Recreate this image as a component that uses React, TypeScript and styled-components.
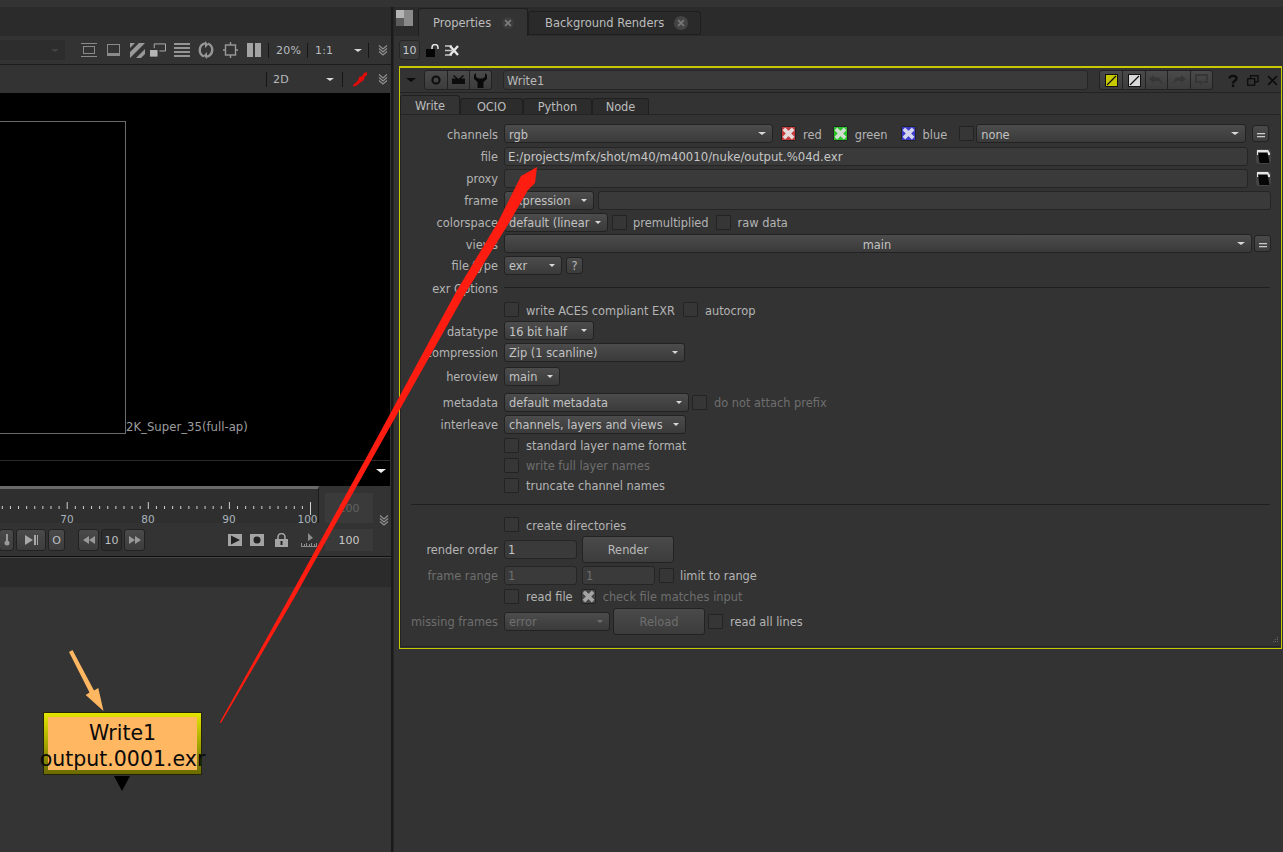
import * as React from 'react';
import styled, { createGlobalStyle } from 'styled-components';

const Colors = {
    panel: '#333333',
    dark: '#2b2b2b',
    label: '#b4b4b4',
    dim: '#6e6e6e',
    yellow: '#c8c800',
};

const GlobalStyle = createGlobalStyle`
    html, body {
        margin: 0;
        padding: 0;
        background: ${Colors.panel};
    }
    body {
        font-family: "DejaVu Sans", sans-serif;
        font-size: 11.4px;
        color: #c4c4c4;
    }
`;

const Page = styled.div`
    position: relative;
    width: 1283px;
    height: 852px;
    overflow: hidden;
    display: grid;
    grid-template-columns: 391px 3px 1fr;
    background: ${Colors.panel};
`;

const LeftPane = styled.div`
    display: flex;
    flex-direction: column;
    min-width: 0;
    overflow: hidden;
`;

const Divider = styled.div`
    background: #1a1a1a;
    border-right: 1px solid #262626;
    margin-top: 7px;
`;

const TopStrip = styled.div`
    height: 7px;
    background: #333;
    flex: none;
`;

const DarkStrip = styled.div`
    height: 29px;
    background: ${Colors.dark};
    flex: none;
`;

const ViewerBar = styled.div`
    height: 28px;
    display: flex;
    align-items: center;
    background: #333;
    flex: none;
`;

const ViewerBarTwo = styled(ViewerBar)`
    border-top: 1px solid #1c1c1c;
`;

const DisabledCombo = styled.div`
    flex: 1;
    height: 20px;
    background: #2d2d2d;
    display: flex;
    align-items: center;
    justify-content: flex-end;
    padding-right: 6px;
    margin-right: 16px;
    box-sizing: border-box;
`;

const Spacer = styled.div`
    flex: 1;
`;

const Gap = styled.div<{ $w: number }>`
    width: ${p => p.$w}px;
    flex: none;
`;

const IconSlot = styled.div<{ $w: number; $ml?: number }>`
    width: ${p => p.$w}px;
    margin-left: ${p => p.$ml ?? 0}px;
    height: 18px;
    display: flex;
    align-items: center;
    justify-content: center;
    flex: none;
`;

const ToolSep = styled.div<{ $l: number; $r: number }>`
    width: 1px;
    height: 15px;
    background: #161616;
    margin: 0 ${p => p.$r}px 0 ${p => p.$l}px;
    flex: none;
`;

const ToolText = styled.span<{ $w: number }>`
    color: #b8bcc0;
    font-size: 11px;
    letter-spacing: 0.2px;
    white-space: nowrap;
    width: ${p => p.$w}px;
    flex: none;
`;

const Tri = styled.span<{ $size?: number; $color?: string }>`
    display: inline-block;
    width: 0;
    height: 0;
    border-left: ${p => p.$size ?? 4}px solid transparent;
    border-right: ${p => p.$size ?? 4}px solid transparent;
    border-top: ${p => (p.$size ?? 4) - 0.5}px solid ${p => p.$color ?? '#d8d8d8'};
    flex: none;
`;

const Viewer = styled.div`
    position: relative;
    height: 367px;
    background: #000;
    flex: none;
    border-right: 1px solid #333;
`;

const FormatBox = styled.div`
    position: absolute;
    left: -2px;
    top: 28px;
    width: 126px;
    height: 311px;
    border: 1px solid #6b6b6b;
`;

const FormatLabel = styled.span`
    position: absolute;
    left: 126px;
    top: 327px;
    font-size: 11.7px;
    line-height: 14px;
    color: #9c9c9c;
`;

const ViewerInfo = styled.div`
    background: #000;
    border-top: 1px solid #2a2a2a;
    border-right: 1px solid #333;
    display: flex;
    align-items: center;
    justify-content: flex-end;
    padding: 0 4px 6px 0;
    height: 19px;
    flex: none;
`;

const Timeline = styled.div`
    height: 70px;
    background: #333;
    flex: none;
    display: grid;
    grid-template-columns: 319px 1fr;
    grid-template-rows: 37px 33px;
`;

const Ruler = styled.div`
    border-top: 3px solid #6a6a6a;
    border-right: 1px solid #1c1c1c;
    background: #2f2f2f;
    height: 37px;
    box-sizing: border-box;
    overflow: hidden;
`;

const RulerSvg = styled.svg`
    display: block;
`;

const RangeCol = styled.div`
    display: flex;
    align-items: flex-start;
    padding: 7px 0 0 6px;
    gap: 6px;
`;

const ChevronDrop = styled.div`
    margin-top: 21px;
`;

const RangeField = styled.div<{ $dim?: boolean }>`
    width: 48px;
    height: ${p => (p.$dim ? 30 : 22)}px;
    background: #3a3a3a;
    color: ${p => (p.$dim ? '#626262' : '#c8c8c8')};
    display: flex;
    align-items: center;
    justify-content: center;
    font-size: 11px;
    flex: none;
`;

const TransportRow = styled.div`
    display: flex;
    align-items: center;
    padding: 6px 2px 5px 0;
    box-sizing: border-box;
    height: 33px;
    gap: 2px;
    overflow: hidden;
`;

const TransportBtn = styled.div<{ $w: number; $ml?: number; $flat?: boolean }>`
    width: ${p => p.$w}px;
    height: 22px;
    margin-left: ${p => p.$ml ?? 0}px;
    background: ${p => (p.$flat ? '#2d2d2d' : 'linear-gradient(#4a4a4a, #3d3d3d)')};
    border: 1px solid #222;
    border-radius: 3px;
    box-sizing: border-box;
    display: flex;
    align-items: center;
    justify-content: center;
    flex: none;
    color: #bcc0c4;
    font-size: 11px;
`;

const TransportIcon = styled.svg<{ $ml: number }>`
    flex: none;
    margin-left: ${p => p.$ml}px;
`;

const RangeBottom = styled.div`
    padding: 6px 0 0 6px;
    display: flex;
`;

const BlackLine = styled.div`
    height: 1px;
    background: #0f0f0f;
    flex: none;
`;

const GreyGap = styled.div`
    height: 1px;
    background: #444;
    flex: none;
`;

const StatusBand = styled.div`
    height: 29px;
    background: ${Colors.dark};
    flex: none;
`;

const NodeGraph = styled.div`
    position: relative;
    flex: 1;
    background: #343434;
`;

const WriteNode = styled.div`
    position: absolute;
    left: 43px;
    top: 125px;
    width: 159px;
    height: 63px;
    box-sizing: border-box;
    border: 1px solid #24240a;
    background: linear-gradient(#e4e400, #6a6a00);
    padding: 4px;
`;

const NodeFace = styled.div`
    height: 100%;
    background: #ffb762;
    display: flex;
    flex-direction: column;
    align-items: center;
    padding-top: 3px;
    box-sizing: border-box;
    font-size: 20.5px;
    line-height: 26px;
    color: #0a0a0a;
    white-space: nowrap;
`;

const NodeOutput = styled.div`
    position: absolute;
    left: 114px;
    top: 189px;
    width: 0;
    height: 0;
    border-left: 8px solid transparent;
    border-right: 8px solid transparent;
    border-top: 15px solid #000;
`;

const RightPane = styled.div`
    display: flex;
    flex-direction: column;
    min-width: 0;
`;

const TabRow = styled.div`
    margin-top: 7px;
    height: 29px;
    background: ${Colors.dark};
    display: flex;
    align-items: flex-end;
    flex: none;
`;

const PaneCorner = styled.div`
    width: 17px;
    height: 16px;
    margin: 0 5px 10px 2px;
    background:
        linear-gradient(#b4b4b4, #b4b4b4) 0 0 / 8px 8px no-repeat,
        linear-gradient(#5c5c5c, #5c5c5c) 0 8px / 8px 8px no-repeat,
        #8a8a8a;
    flex: none;
`;

const PaneTab = styled.div<{ $active?: boolean; $w: number }>`
    width: ${p => p.$w}px;
    height: ${p => (p.$active ? 28 : 24)}px;
    box-sizing: border-box;
    display: flex;
    align-items: center;
    padding-left: ${p => (p.$active ? 14 : 16)}px;
    gap: ${p => (p.$active ? 11 : 10)}px;
    background: ${p => (p.$active ? '#333' : '#2a2a2a')};
    border: 1px solid #1e1e1e;
    border-bottom: ${p => (p.$active ? 'none' : '1px solid #1e1e1e')};
    border-radius: 3px 3px 0 0;
    color: #bcbcbc;
    font-size: 11.5px;
    white-space: nowrap;
    margin-bottom: ${p => (p.$active ? 0 : 1)}px;
`;

const TabClose = styled.span<{ $big?: boolean }>`
    width: ${p => (p.$big ? 14 : 12)}px;
    height: ${p => (p.$big ? 14 : 12)}px;
    border-radius: 50%;
    background: ${p => (p.$big ? '#444' : '#3c3c3c')};
    display: flex;
    align-items: center;
    justify-content: center;
    flex: none;
`;

const PropsTool = styled.div`
    height: 30px;
    display: flex;
    align-items: center;
    padding: 0 0 2px 5px;
    box-sizing: border-box;
    gap: 6px;
    flex: none;
`;

const MaxPanels = styled.div`
    width: 21px;
    height: 20px;
    background: #3a3a3a;
    border: 1px solid #262626;
    border-radius: 3px;
    box-sizing: border-box;
    color: #c0c8d0;
    display: flex;
    align-items: center;
    justify-content: center;
    font-size: 11px;
`;

const PropPanel = styled.div`
    margin: 0 0 0 5px;
    width: 883px;
    height: 583px;
    box-sizing: border-box;
    border: 1px solid ${Colors.yellow};
    border-top-width: 2px;
    background: #333;
    display: flex;
    flex-direction: column;
    flex: none;
`;

const PanelHead = styled.div`
    height: 24px;
    display: flex;
    align-items: center;
    border-bottom: 1px solid #222;
    flex: none;
    padding-left: 6px;
`;

const BtnGroup = styled.div`
    display: flex;
    height: 20px;
    box-sizing: border-box;
    border: 1px solid #222;
    border-radius: 3px;
    background: linear-gradient(#4a4a4a, #3c3c3c);
    flex: none;
`;

const GroupBtn = styled.div<{ $w: number }>`
    width: ${p => p.$w}px;
    box-sizing: border-box;
    display: flex;
    align-items: center;
    justify-content: center;
    & + & {
        border-left: 1px solid #222;
    }
`;

const NameField = styled.div`
    width: 585px;
    height: 20px;
    margin: 0 11px;
    box-sizing: border-box;
    background: #3a3a3a;
    border: 1px solid #262626;
    border-radius: 3px;
    padding-left: 3px;
    line-height: 20px;
    color: #b8b8b8;
    flex: none;
`;

const HeadIcons = styled.div`
    margin-left: 14px;
    display: flex;
    align-items: center;
    gap: 8px;
`;

const KnobTabs = styled.div`
    display: flex;
    align-items: flex-end;
    height: 21px;
    flex: none;
`;

const KnobTab = styled.div<{ $active?: boolean; $w: number }>`
    width: ${p => p.$w}px;
    height: ${p => (p.$active ? 20 : 16)}px;
    display: flex;
    align-items: center;
    justify-content: center;
    background: ${p => (p.$active ? '#333' : '#2c2c2c')};
    border: 1px solid #202020;
    border-bottom: none;
    border-radius: 3px 3px 0 0;
    box-sizing: border-box;
    color: #bcbcbc;
    position: relative;
    margin-bottom: ${p => (p.$active ? -1 : 0)}px;
`;

const KnobArea = styled.div`
    flex: 1;
    margin: 0 0 1px 0;
    border: 1px solid #242424;
    border-right-color: #2a2a2a;
    border-radius: 2px;
    padding-top: 7px;
    position: relative;
`;

const Row = styled.div<{ $h?: number; $mt?: number }>`
    display: flex;
    align-items: center;
    height: ${p => p.$h ?? 22}px;
    margin-top: ${p => p.$mt ?? 0}px;
`;

const Label = styled.div<{ $dim?: boolean }>`
    width: 97px;
    padding-top: 2px;
    text-align: right;
    margin-right: 6px;
    color: ${p => (p.$dim ? Colors.dim : Colors.label)};
    white-space: nowrap;
    flex: none;
`;

const Combo = styled.div<{ $w: number; $dim?: boolean; $ml?: number }>`
    width: ${p => p.$w}px;
    height: 19px;
    margin-left: ${p => p.$ml ?? 0}px;
    box-sizing: border-box;
    border: 1px solid #222;
    border-radius: 3px;
    background: linear-gradient(#4c4c4c, #3a3a3a);
    display: flex;
    align-items: center;
    padding: 0 6px 0 4px;
    color: ${p => (p.$dim ? Colors.dim : '#c2c2c2')};
    white-space: nowrap;
    flex: none;
    overflow: hidden;
`;

const ComboText = styled.span<{ $center?: boolean }>`
    flex: 1;
    padding-top: 2px;
    padding-left: ${p => (p.$center ? 8 : 0)}px;
    text-align: ${p => (p.$center ? 'center' : 'left')};
`;

const Field = styled.div<{ $w: number; $dim?: boolean; $ml?: number; $large?: boolean }>`
    width: ${p => p.$w}px;
    height: 19px;
    margin-left: ${p => p.$ml ?? 0}px;
    box-sizing: border-box;
    background: #3a3a3a;
    border: 1px solid #252525;
    border-radius: 3px;
    padding-left: 3px;
    line-height: 18px;
    color: ${p => (p.$dim ? Colors.dim : '#c6c6c6')};
    font-size: ${p => (p.$large ? 11.7 : 11.4)}px;
    white-space: nowrap;
    flex: none;
`;

const Check = styled.div<{ $ml?: number; $color?: string }>`
    width: 15px;
    height: 15px;
    margin-left: ${p => p.$ml ?? 0}px;
    box-sizing: border-box;
    background: ${p => p.$color ?? '#363636'};
    border: 1px solid #232323;
    border-radius: 1px;
    display: flex;
    align-items: center;
    justify-content: center;
    flex: none;
`;

const CheckLabel = styled.span<{ $dim?: boolean; $ml?: number }>`
    margin-left: ${p => p.$ml ?? 7}px;
    padding-top: 2px;
    color: ${p => (p.$dim ? Colors.dim : Colors.label)};
    white-space: nowrap;
    flex: none;
`;

const SmallBtn = styled.div<{ $w: number; $ml?: number; $h?: number; $dim?: boolean }>`
    width: ${p => p.$w}px;
    height: ${p => p.$h ?? 17}px;
    margin-left: ${p => p.$ml ?? 0}px;
    padding-top: 2px;
    box-sizing: border-box;
    background: linear-gradient(#4a4a4a, #3c3c3c);
    border: 1px solid #222;
    border-radius: 3px;
    display: flex;
    align-items: center;
    justify-content: center;
    color: ${p => (p.$dim ? Colors.dim : '#b8b8b8')};
    flex: none;
`;

const FileBtn = styled.div`
    width: 15px;
    height: 15px;
    margin-left: 8px;
    background: #444;
    border-radius: 3px;
    display: flex;
    align-items: center;
    justify-content: center;
    flex: none;
`;

const Rule = styled.div<{ $ml?: number }>`
    flex: 1;
    height: 1px;
    background: #1f1f1f;
    margin-left: ${p => p.$ml ?? 0}px;
    margin-right: 10px;
`;

const Overlay = styled.svg`
    position: absolute;
    left: 0;
    top: 0;
    pointer-events: none;
`;

const Grip = styled.svg`
    position: absolute;
    right: 1px;
    bottom: 1px;
`;

const DoubleChevron = () => (
    <svg width="10" height="12" viewBox="0 0 10 12" fill="none" stroke="#8f8f8f" strokeWidth="1.3">
        <path d="M1 1.5 5 5 9 1.5M1 4.5 5 8 9 4.5M1 7.5 5 11 9 7.5" />
    </svg>
);

const Cross = ({ color = '#fff', size = 14, width = 3.4 }: { color?: string; size?: number; width?: number }) => (
    <svg width={size} height={size} viewBox="0 0 14 14" stroke={color} strokeWidth={width} fill="none">
        <path d="M2 2 12 12M12 2 2 12" />
    </svg>
);

const FolderIcon = () => (
    <svg width="13" height="13" viewBox="0 0 13 13">
        <path d="M0 0H11L13 3V5H0Z" fill="#e4e4e4" />
        <path d="M1 2.5H10.5L12.5 13H2.5Z" fill="#050505" />
    </svg>
);

const EqualsIcon = () => (
    <svg width="8" height="6" viewBox="0 0 8 6" fill="#c8c8c8">
        <rect width="8" height="1.3" y="1" />
        <rect width="8" height="1.3" y="4" />
    </svg>
);

const Ticks = () => {
    const ticks: React.ReactNode[] = [];
    const labels = [
        { x: 67, t: '70' },
        { x: 148, t: '80' },
        { x: 229, t: '90' },
        { x: 307.5, t: '100' },
    ];
    for (let i = 0; i <= 39; i++) {
        const x = 310 - i * 8.11;
        const major = i % 10 === 0;
        const h = i === 0 ? 13 : major ? 7 : 3;
        ticks.push(<rect key={i} x={x} y={major ? 13 : 17} width="1" height={h} fill="#cfcfcf" />);
    }
    return (
        <RulerSvg width="318" height="34">
            {ticks}
            {labels.map(l => (
                <text key={l.t} x={l.x} y="33.5" fill="#a9b4bc" fontSize="10.5" textAnchor="middle" fontFamily="DejaVu Sans">
                    {l.t}
                </text>
            ))}
        </RulerSvg>
    );
};

const App = () => (
    <Page>
        <GlobalStyle />
        <LeftPane>
            <TopStrip />
            <DarkStrip />
            <ViewerBar>
                <DisabledCombo>
                    <Tri $color="#444" />
                </DisabledCombo>
                <IconSlot $w={16}>
                    <svg width="16" height="14" viewBox="0 0 16 14" fill="none" stroke="#8a8a8a">
                        <path d="M0 .5H16M0 13.5H16" />
                        <rect x="2.5" y="3.5" width="11" height="7" />
                    </svg>
                </IconSlot>
                <IconSlot $w={13} $ml={10}>
                    <svg width="13" height="12" viewBox="0 0 13 12" fill="none" stroke="#8a8a8a" strokeWidth="1">
                        <rect x=".5" y=".5" width="12" height="9" />
                        <path d="M0 11H13" strokeWidth="2" />
                    </svg>
                </IconSlot>
                <IconSlot $w={15} $ml={10}>
                    <svg width="15" height="15" viewBox="0 0 15 15" fill="#999">
                        <path d="M0 0H5L0 5ZM9 0H15L0 15V9ZM15 6V11L11 15H6Z" />
                    </svg>
                </IconSlot>
                <IconSlot $w={16} $ml={5}>
                    <svg width="17" height="15" viewBox="0 0 17 15">
                        <rect x="0" y="7" width="8" height="7" fill="#b4b4b4" />
                        <path d="M4.5 5V.5H16.5V8H10" fill="none" stroke="#b4b4b4" />
                    </svg>
                </IconSlot>
                <IconSlot $w={16} $ml={8}>
                    <svg width="16" height="15" viewBox="0 0 16 15" fill="#949494">
                        <rect width="16" height="2" />
                        <rect y="4" width="16" height="2" />
                        <rect y="8" width="16" height="2" />
                        <rect y="12" width="16" height="2" />
                    </svg>
                </IconSlot>
                <IconSlot $w={18} $ml={7}>
                    <svg width="18" height="18" viewBox="0 0 18 18" fill="none" stroke="#969696" strokeWidth="2.4">
                        <path d="M7 15.5A7 7 0 0 1 8 2.3" />
                        <path d="M11 2.5A7 7 0 0 1 10 15.7" />
                        <path d="M8 0 11.5 3.5 8 7Z M10 11 6.5 14.5 10 18Z" fill="#969696" stroke="none" />
                    </svg>
                </IconSlot>
                <IconSlot $w={15} $ml={8}>
                    <svg width="15" height="16" viewBox="0 0 15 16" fill="none" stroke="#9a9a9a" strokeWidth="1.4">
                        <rect x="2.5" y="3" width="10" height="10" />
                        <path d="M7.5 0V3M7.5 13V16M0 8H2.5M12.5 8H15" />
                    </svg>
                </IconSlot>
                <IconSlot $w={14} $ml={9}>
                    <svg width="14" height="14" viewBox="0 0 14 14" fill="#a4a4a4">
                        <rect width="6" height="14" />
                        <rect x="8" width="6" height="14" />
                    </svg>
                </IconSlot>
                <ToolSep $l={7} $r={7} />
                <ToolText $w={31}>20%</ToolText>
                <ToolSep $l={0} $r={7} />
                <ToolText $w={39}>1:1</ToolText>
                <Tri />
                <ToolSep $l={6} $r={9} />
                <DoubleChevron />
                <Gap $w={3} />
            </ViewerBar>
            <ViewerBarTwo>
                <Spacer />
                <ToolSep $l={0} $r={6} />
                <ToolText $w={53}>2D</ToolText>
                <Tri />
                <ToolSep $l={8} $r={10} />
                <svg width="15" height="15" viewBox="0 0 15 15">
                    <path d="M0 13 5 8.5 6 5 9 4 11 1 14 0 14 3 11.5 5 11 8 8 10 3 14 0 14.5Z" fill="#e00b0b" />
                </svg>
                <Gap $w={10} />
                <DoubleChevron />
                <Gap $w={3} />
            </ViewerBarTwo>
            <Viewer>
                <FormatBox />
                <FormatLabel>2K_Super_35(full-ap)</FormatLabel>
            </Viewer>
            <ViewerInfo>
                <Tri $size={5} $color="#f0f0f0" />
            </ViewerInfo>
            <Timeline>
                <Ruler>
                    <Ticks />
                </Ruler>
                <RangeCol>
                    <RangeField $dim>100</RangeField>
                    <ChevronDrop>
                        <DoubleChevron />
                    </ChevronDrop>
                </RangeCol>
                <TransportRow>
                    <TransportBtn $w={15} $ml={-1}>
                        <svg width="6" height="12" viewBox="0 0 6 12" fill="#999">
                            <rect x="2" width="2" height="8" />
                            <circle cx="3" cy="9" r="2.5" />
                        </svg>
                    </TransportBtn>
                    <TransportBtn $w={30}>
                        <svg width="13" height="10" viewBox="0 0 13 10" fill="#a8a8a8">
                            <path d="M0 0 8 5 0 10Z" />
                            <rect x="9" width="2" height="10" />
                            <rect x="12" width="1" height="10" />
                        </svg>
                    </TransportBtn>
                    <TransportBtn $w={17}>O</TransportBtn>
                    <TransportBtn $w={21} $ml={11}>
                        <svg width="12" height="8" viewBox="0 0 12 8" fill="#999">
                            <path d="M6 0V8L0 4ZM12 0V8L6 4Z" />
                        </svg>
                    </TransportBtn>
                    <TransportBtn $w={21} $flat>10</TransportBtn>
                    <TransportBtn $w={21}>
                        <svg width="12" height="8" viewBox="0 0 12 8" fill="#999">
                            <path d="M0 0V8L6 4ZM6 0V8L12 4Z" />
                        </svg>
                    </TransportBtn>
                    <Spacer />
                    <TransportIcon $ml={0} width="14" height="12" viewBox="0 0 14 12">
                        <rect width="14" height="12" fill="#a4a4a4" />
                        <path d="M3 1.5 12 6 3 10.5Z" fill="#222" />
                    </TransportIcon>
                    <TransportIcon $ml={6} width="14" height="12" viewBox="0 0 14 12">
                        <rect width="14" height="12" fill="#a4a4a4" />
                        <circle cx="7" cy="6" r="3.5" fill="#222" />
                    </TransportIcon>
                    <TransportIcon $ml={9} width="13" height="14" viewBox="0 0 13 14">
                        <path d="M3 6V4A3.5 3.5 0 0 1 10 4V6" fill="none" stroke="#a4a4a4" strokeWidth="1.6" />
                        <rect y="6" width="13" height="8" fill="#a4a4a4" />
                        <rect x="5.5" y="8" width="2" height="4" fill="#222" />
                    </TransportIcon>
                    <TransportIcon $ml={11} width="16" height="14" viewBox="0 0 16 14" fill="#8c8c8c">
                        <path d="M7 0 12 5 7 8Z" />
                        <path d="M0 13H16V14H0ZM0 10H1V13H0ZM5 10H6V13H5ZM10 10H11V13H10ZM15 10H16V13H15ZM3 11H4V13H3ZM8 11H9V13H8ZM13 11H14V13H13Z" />
                    </TransportIcon>
                </TransportRow>
                <RangeBottom>
                    <RangeField>100</RangeField>
                </RangeBottom>
            </Timeline>
            <BlackLine />
            <GreyGap />
            <StatusBand />
            <NodeGraph>
                <WriteNode>
                    <NodeFace>
                        <span>Write1</span>
                        <span>output.0001.exr</span>
                    </NodeFace>
                </WriteNode>
                <NodeOutput />
            </NodeGraph>
        </LeftPane>
        <Divider />
        <RightPane>
            <TabRow>
                <PaneCorner />
                <PaneTab $active $w={110}>
                    Properties
                    <TabClose>
                        <Cross color="#7c7c7c" size={8} width={3} />
                    </TabClose>
                </PaneTab>
                <PaneTab $w={173}>
                    Background Renders
                    <TabClose $big>
                        <Cross color="#787878" size={8} width={3} />
                    </TabClose>
                </PaneTab>
            </TabRow>
            <PropsTool>
                <MaxPanels>10</MaxPanels>
                <svg width="13" height="13" viewBox="0 0 13 13">
                    <path d="M6 6V3.5A3 3 0 0 1 12 3.5V5" fill="none" stroke="#e8e8e8" strokeWidth="1.5" />
                    <rect y="5" width="9" height="8" fill="#050505" />
                </svg>
                <svg width="14" height="11" viewBox="0 0 14 11">
                    <path d="M0 1H7M0 5.5H7M0 10H7" stroke="#c8c8c8" strokeWidth="1.5" />
                    <path d="M5 1 13 10M13 1 5 10" stroke="#e6e6e6" strokeWidth="2.4" />
                </svg>
            </PropsTool>
            <PropPanel>
                <PanelHead>
                    <Tri $size={5} $color="#0a0a0a" />
                    <Gap $w={8} />
                    <BtnGroup>
                        <GroupBtn $w={22}>
                            <svg width="10" height="10" viewBox="0 0 10 10" fill="none" stroke="#0c0c0c" strokeWidth="2">
                                <circle cx="5" cy="5" r="3.6" />
                            </svg>
                        </GroupBtn>
                        <GroupBtn $w={22}>
                            <svg width="13" height="11" viewBox="0 0 13 11" fill="#0c0c0c">
                                <path d="M2 0 6 3.5H7L11 0 12 1 9 3.5H13V9H0V3.5H4L1 1Z" />
                            </svg>
                        </GroupBtn>
                        <GroupBtn $w={22}>
                            <svg width="13" height="15" viewBox="0 0 13 15" fill="#0a0a0a">
                                <path d="M2 0V4L4.5 5.5 8.5 5.5 11 4V0L13 2V6L9.5 9V15H3.5V9L0 6V2Z" />
                            </svg>
                        </GroupBtn>
                    </BtnGroup>
                    <NameField>Write1</NameField>
                    <BtnGroup>
                        <GroupBtn $w={22.4}>
                            <svg width="13" height="13" viewBox="0 0 13 13">
                                <rect x=".5" y=".5" width="12" height="12" fill="#c8c800" stroke="#111" />
                                <path d="M2 11 11 2" stroke="#111" strokeWidth="1.2" />
                            </svg>
                        </GroupBtn>
                        <GroupBtn $w={22.4}>
                            <svg width="13" height="13" viewBox="0 0 13 13">
                                <rect x=".5" y=".5" width="12" height="12" fill="#d8d8d8" stroke="#111" />
                                <path d="M2 11 11 2" stroke="#111" strokeWidth="1.2" />
                            </svg>
                        </GroupBtn>
                        <GroupBtn $w={22.4}>
                            <svg width="14" height="10" viewBox="0 0 14 10" fill="#363636">
                                <path d="M0 4 5 0V2.5H10L14 9 9.5 6H5V8Z" />
                            </svg>
                        </GroupBtn>
                        <GroupBtn $w={22.4}>
                            <svg width="14" height="10" viewBox="0 0 14 10" fill="#363636">
                                <path d="M14 4 9 0V2.5H4L0 9 4.5 6H9V8Z" />
                            </svg>
                        </GroupBtn>
                        <GroupBtn $w={22.4}>
                            <svg width="13" height="12" viewBox="0 0 13 12" fill="none" stroke="#363636" strokeWidth="2">
                                <path d="M5 8H1V1H12V8H8" />
                                <path d="M7 6V11L4 8.5Z" fill="#363636" stroke="none" />
                            </svg>
                        </GroupBtn>
                    </BtnGroup>
                    <HeadIcons>
                        <svg width="12" height="13" viewBox="0 0 12 13" fill="none" stroke="#0c0c0c" strokeWidth="2.3">
                            <path d="M2.5 4.5C2.5 1 9.5 1 9.5 4.5C9.5 7 6 6.5 6 9.5" />
                            <path d="M6 10.5V13" />
                        </svg>
                        <svg width="12" height="11" viewBox="0 0 12 11" fill="none" stroke="#0c0c0c" strokeWidth="1.3">
                            <rect x="3.5" y=".7" width="7.5" height="6" />
                            <rect x=".7" y="3.7" width="7" height="6.5" fill="#333" />
                        </svg>
                        <svg width="11" height="11" viewBox="0 0 11 11" fill="none" stroke="#0c0c0c" strokeWidth="1.6">
                            <path d="M1 1 10 10M10 1 1 10" />
                        </svg>
                    </HeadIcons>
                </PanelHead>
                <KnobTabs>
                    <KnobTab $active $w={60}>Write</KnobTab>
                    <KnobTab $w={63}>OCIO</KnobTab>
                    <KnobTab $w={69}>Python</KnobTab>
                    <KnobTab $w={57}>Node</KnobTab>
                </KnobTabs>
                <KnobArea>
                    <Row $h={23}>
                        <Label>channels</Label>
                        <Combo $w={269}>
                            <ComboText>rgb</ComboText>
                            <Tri />
                        </Combo>
                        <Check $ml={8} $color="#c43c3c">
                            <Cross color="#e6dada" size={13} width={4} />
                        </Check>
                        <CheckLabel>red</CheckLabel>
                        <Check $ml={11} $color="#28c428">
                            <Cross color="#d0dcd0" size={13} width={4} />
                        </Check>
                        <CheckLabel>green</CheckLabel>
                        <Check $ml={13} $color="#3c3cc8">
                            <Cross color="#d4d4ec" size={13} width={4} />
                        </Check>
                        <CheckLabel>blue</CheckLabel>
                        <Check $ml={12} />
                        <Combo $w={270} $ml={2}>
                            <ComboText>none</ComboText>
                            <Tri />
                        </Combo>
                        <SmallBtn $w={17} $ml={6}>
                            <EqualsIcon />
                        </SmallBtn>
                    </Row>
                    <Row>
                        <Label>file</Label>
                        <Field $w={744} $large>E:/projects/mfx/shot/m40/m40010/nuke/output.%04d.exr</Field>
                        <FileBtn>
                            <FolderIcon />
                        </FileBtn>
                    </Row>
                    <Row>
                        <Label>proxy</Label>
                        <Field $w={744} />
                        <FileBtn>
                            <FolderIcon />
                        </FileBtn>
                    </Row>
                    <Row>
                        <Label>frame</Label>
                        <Combo $w={90}>
                            <ComboText>expression</ComboText>
                            <Tri $size={3.5} />
                        </Combo>
                        <Field $w={673} $ml={4} />
                    </Row>
                    <Row>
                        <Label>colorspace</Label>
                        <Combo $w={104}>
                            <ComboText>default (linear</ComboText>
                            <Tri $size={3.5} />
                        </Combo>
                        <Check $ml={4} />
                        <CheckLabel $ml={6}>premultiplied</CheckLabel>
                        <Check $ml={7} />
                        <CheckLabel>raw data</CheckLabel>
                    </Row>
                    <Row $h={21}>
                        <Label>views</Label>
                        <Combo $w={748}>
                            <ComboText $center>main</ComboText>
                            <Tri />
                        </Combo>
                        <SmallBtn $w={17} $ml={2}>
                            <EqualsIcon />
                        </SmallBtn>
                    </Row>
                    <Row>
                        <Label>file type</Label>
                        <Combo $w={58}>
                            <ComboText>exr</ComboText>
                            <Tri $size={3.5} />
                        </Combo>
                        <SmallBtn $w={17} $ml={4}>?</SmallBtn>
                    </Row>
                    <Row $h={23}>
                        <Label>exr Options</Label>
                        <Rule />
                    </Row>
                    <Row $h={21}>
                        <Label />
                        <Check />
                        <CheckLabel>write ACES compliant EXR</CheckLabel>
                        <Check $ml={8} />
                        <CheckLabel>autocrop</CheckLabel>
                    </Row>
                    <Row $h={21}>
                        <Label>datatype</Label>
                        <Combo $w={90}>
                            <ComboText>16 bit half</ComboText>
                            <Tri $size={3.5} />
                        </Combo>
                    </Row>
                    <Row>
                        <Label>compression</Label>
                        <Combo $w={181}>
                            <ComboText>Zip (1 scanline)</ComboText>
                            <Tri $size={3.5} />
                        </Combo>
                    </Row>
                    <Row $h={26}>
                        <Label>heroview</Label>
                        <Combo $w={56}>
                            <ComboText>main</ComboText>
                            <Tri $size={3.5} />
                        </Combo>
                    </Row>
                    <Row $mt={2}>
                        <Label>metadata</Label>
                        <Combo $w={185}>
                            <ComboText>default metadata</ComboText>
                            <Tri $size={3.5} />
                        </Combo>
                        <Check $ml={3} />
                        <CheckLabel $dim>do not attach prefix</CheckLabel>
                    </Row>
                    <Row>
                        <Label>interleave</Label>
                        <Combo $w={182}>
                            <ComboText>channels, layers and views</ComboText>
                            <Tri $size={3.5} />
                        </Combo>
                    </Row>
                    <Row $h={20}>
                        <Label />
                        <Check />
                        <CheckLabel>standard layer name format</CheckLabel>
                    </Row>
                    <Row $h={20}>
                        <Label />
                        <Check />
                        <CheckLabel $dim>write full layer names</CheckLabel>
                    </Row>
                    <Row $h={20}>
                        <Label />
                        <Check />
                        <CheckLabel>truncate channel names</CheckLabel>
                    </Row>
                    <Row $h={19}>
                        <Rule $ml={10} />
                    </Row>
                    <Row $h={21}>
                        <Label />
                        <Check />
                        <CheckLabel>create directories</CheckLabel>
                    </Row>
                    <Row $h={28}>
                        <Label>render order</Label>
                        <Field $w={73}>1</Field>
                        <SmallBtn $w={92} $ml={5} $h={27}>Render</SmallBtn>
                    </Row>
                    <Row $h={24}>
                        <Label $dim>frame range</Label>
                        <Field $w={73} $dim>1</Field>
                        <Field $w={73} $dim $ml={5}>1</Field>
                        <Check $ml={4} />
                        <CheckLabel $ml={6}>limit to range</CheckLabel>
                    </Row>
                    <Row $h={18}>
                        <Label />
                        <Check />
                        <CheckLabel>read file</CheckLabel>
                        <Check $ml={8} $color="#444">
                            <Cross color="#a4a4a4" size={13} width={4} />
                        </Check>
                        <CheckLabel $dim>check file matches input</CheckLabel>
                    </Row>
                    <Row $h={32}>
                        <Label $dim>missing frames</Label>
                        <Combo $w={106} $dim>
                            <ComboText>error</ComboText>
                            <Tri $size={3.5} $color="#6e6e6e" />
                        </Combo>
                        <SmallBtn $w={92} $ml={3} $h={27} $dim>Reload</SmallBtn>
                        <Check $ml={3} />
                        <CheckLabel>read all lines</CheckLabel>
                    </Row>
                    <Grip width="8" height="8" viewBox="0 0 8 8" fill="#666">
                        <rect x="6" y="0" width="1" height="1" />
                        <rect x="4" y="2" width="1" height="1" />
                        <rect x="6" y="2" width="1" height="1" />
                        <rect x="2" y="4" width="1" height="1" />
                        <rect x="4" y="4" width="1" height="1" />
                        <rect x="6" y="4" width="1" height="1" />
                    </Grip>
                </KnobArea>
            </PropPanel>
        </RightPane>
        <Overlay width="1283" height="852" viewBox="0 0 1283 852">
            <path d="M220 722 288 600 370.5 450 456 292 498 222 521 176 537 167 535 183 528 190 509 223 466 292 377 450 293 600 221 723Z" fill="#ff1c10" />
            <path d="M69 652 89.5 692.5 85.7 695 103.5 711 98.3 688 94 690.5 72.5 650Z" fill="#ffb762" />
        </Overlay>
    </Page>
);

export default App;
